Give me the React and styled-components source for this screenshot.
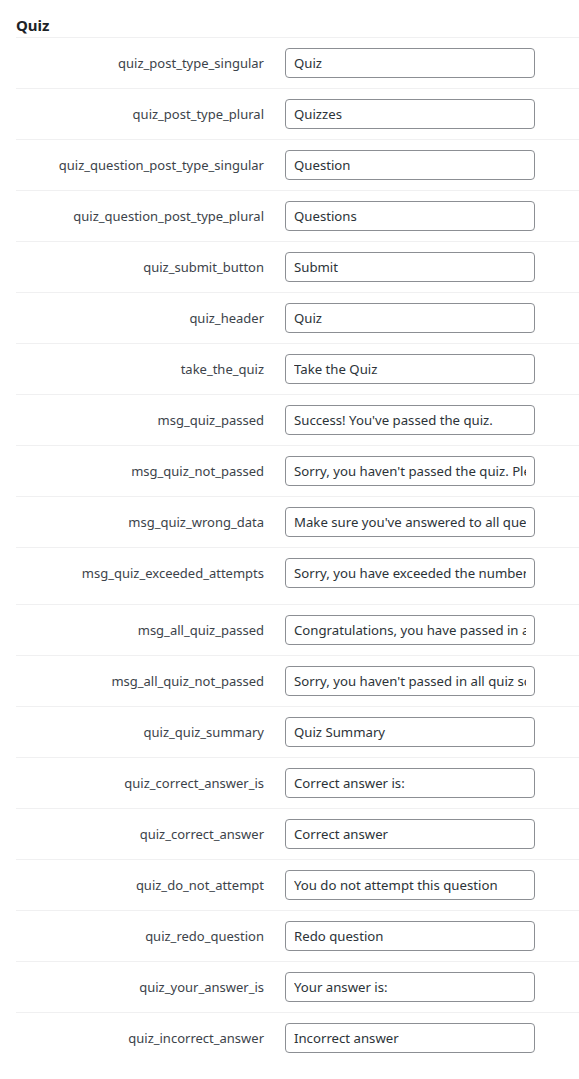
import React from "react";
import styled, { createGlobalStyle } from "styled-components";

const GlobalStyle = createGlobalStyle`
  body {
    margin: 0;
    background: #ffffff;
    font-family: "Noto Sans", "Open Sans", sans-serif;
  }
`;

const fields = [
  { key: "quiz_post_type_singular", value: "Quiz" },
  { key: "quiz_post_type_plural", value: "Quizzes" },
  { key: "quiz_question_post_type_singular", value: "Question" },
  { key: "quiz_question_post_type_plural", value: "Questions" },
  { key: "quiz_submit_button", value: "Submit" },
  { key: "quiz_header", value: "Quiz" },
  { key: "take_the_quiz", value: "Take the Quiz" },
  { key: "msg_quiz_passed", value: "Success! You've passed the quiz." },
  { key: "msg_quiz_not_passed", value: "Sorry, you haven't passed the quiz. Please try again." },
  { key: "msg_quiz_wrong_data", value: "Make sure you've answered to all questions." },
  { key: "msg_quiz_exceeded_attempts", value: "Sorry, you have exceeded the number of attempts.", tall: true },
  { key: "msg_all_quiz_passed", value: "Congratulations, you have passed in all quizzes." },
  { key: "msg_all_quiz_not_passed", value: "Sorry, you haven't passed in all quiz score." },
  { key: "quiz_quiz_summary", value: "Quiz Summary" },
  { key: "quiz_correct_answer_is", value: "Correct answer is:" },
  { key: "quiz_correct_answer", value: "Correct answer" },
  { key: "quiz_do_not_attempt", value: "You do not attempt this question" },
  { key: "quiz_redo_question", value: "Redo question" },
  { key: "quiz_your_answer_is", value: "Your answer is:" },
  { key: "quiz_incorrect_answer", value: "Incorrect answer" },
];

const App = () => {
  return (
    <>
      <GlobalStyle />
      <Wrap>
        <Title>Quiz</Title>
        <Table>
          {fields.map((f) => (
            <Row key={f.key} $tall={f.tall}>
              <Label htmlFor={f.key}>{f.key}</Label>
              <TextInput id={f.key} type="text" defaultValue={f.value} />
            </Row>
          ))}
        </Table>
      </Wrap>
    </>
  );
};

const Wrap = styled.div`
  padding: 16px 0 20px 16px;
`;

const Title = styled.h2`
  margin: 0;
  height: 21px;
  font-size: 15px;
  line-height: 18px;
  font-weight: 700;
  color: #1d2327;
`;

const Table = styled.div`
  display: flex;
  flex-direction: column;
`;

const Row = styled.div`
  display: flex;
  align-items: center;
  gap: 21px;
  height: 50px;
  padding-bottom: ${(p) => (p.$tall ? "7px" : "1px")};
  box-sizing: content-box;
  border-top: 1px solid #f0f0f1;
  margin-bottom: -1px;
`;

const Label = styled.label`
  width: 248px;
  text-align: right;
  font-size: 13px;
  color: #3c434a;
  white-space: nowrap;
`;

const TextInput = styled.input`
  box-sizing: border-box;
  width: 250px;
  height: 30px;
  padding: 0 8px;
  border: 1px solid #8c8f94;
  border-radius: 4px;
  background: #ffffff;
  font-family: "Noto Sans", "Open Sans", sans-serif;
  font-size: 13.2px;
  color: #2c3338;
  outline: none;
`;

export default App;
